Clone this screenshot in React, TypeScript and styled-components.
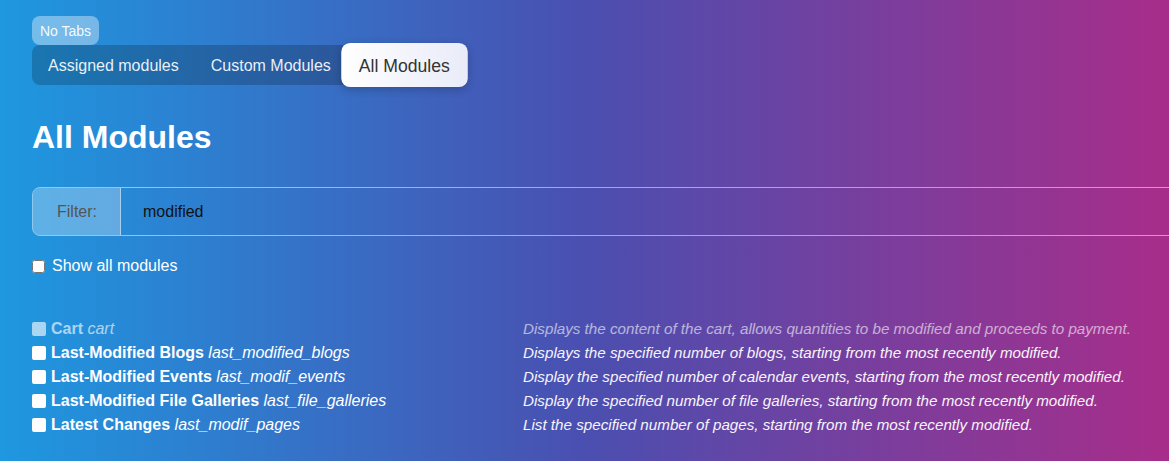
import styled, { createGlobalStyle } from "styled-components";

type Module = {
  name: string;
  code: string;
  description: string;
  disabled?: boolean;
};

const MODULES: Module[] = [
  {
    name: "Cart",
    code: "cart",
    description:
      "Displays the content of the cart, allows quantities to be modified and proceeds to payment.",
    disabled: true,
  },
  {
    name: "Last-Modified Blogs",
    code: "last_modified_blogs",
    description:
      "Displays the specified number of blogs, starting from the most recently modified.",
  },
  {
    name: "Last-Modified Events",
    code: "last_modif_events",
    description:
      "Display the specified number of calendar events, starting from the most recently modified.",
  },
  {
    name: "Last-Modified File Galleries",
    code: "last_file_galleries",
    description:
      "Display the specified number of file galleries, starting from the most recently modified.",
  },
  {
    name: "Latest Changes",
    code: "last_modif_pages",
    description:
      "List the specified number of pages, starting from the most recently modified.",
  },
];

const TABS = ["Assigned modules", "Custom Modules", "All Modules"];

const GlobalStyle = createGlobalStyle`
  html, body {
    margin: 0;
    height: 100%;
  }
  body {
    font-family: "Liberation Sans", Arial, sans-serif;
    background: linear-gradient(to right, #1e98e0 0%, #4a4fb0 50%, #a82d8a 100%);
    color: #fff;
    overflow: hidden;
  }
`;

const Page = styled.div`
  padding: 16px 0 0 32px;
  min-height: 461px;
  box-sizing: border-box;
`;

const Badge = styled.span`
  display: inline-block;
  padding: 6px 8px 5px;
  font-size: 14px;
  line-height: 18px;
  border-radius: 8px;
  background: rgba(255, 255, 255, 0.38);
  color: rgba(255, 255, 255, 0.95);
`;

const TabBar = styled.nav`
  display: flex;
  width: fit-content;
  border-radius: 8px;
  background: rgba(0, 0, 0, 0.2);
`;

const Tab = styled.button<{ $active?: boolean }>`
  border: 0;
  font-family: inherit;
  font-size: 16px;
  line-height: 20px;
  padding: 11px 16px 9px;
  border-radius: 8px;
  cursor: pointer;
  background: ${(p) =>
    p.$active ? "linear-gradient(to right, #ffffff, #e9ebf8)" : "transparent"};
  color: ${(p) => (p.$active ? "#333" : "rgba(255,255,255,0.92)")};
  transform: ${(p) => (p.$active ? "scale(1.1)" : "none")};
  box-shadow: ${(p) => (p.$active ? "0 2px 8px rgba(0,0,0,0.2)" : "none")};
`;

const Title = styled.h1`
  margin: 34px 0 32px;
  font-size: 32px;
  line-height: 36px;
  font-weight: bold;
`;

const FilterGroup = styled.div`
  display: flex;
  height: 49px;
  margin-right: -30px;
  border: 1px solid rgba(255, 255, 255, 0.5);
  border-radius: 8px;
  box-sizing: border-box;
  overflow: hidden;
`;

const FilterLabel = styled.label`
  display: flex;
  align-items: center;
  padding: 0 23px 0 24px;
  font-size: 16px;
  color: #555;
  background: rgba(255, 255, 255, 0.28);
  border-right: 1px solid rgba(255, 255, 255, 0.45);
`;

const FilterInput = styled.input`
  flex: 1;
  border: 0;
  outline: none;
  background: transparent;
  padding: 0 22px;
  font-family: inherit;
  font-size: 16px;
  color: #111;
`;

const ShowAll = styled.label`
  display: flex;
  align-items: center;
  gap: 7px;
  margin-top: 21px;
  font-size: 16px;
  line-height: 18px;
  input {
    margin: 0;
    width: 13px;
    height: 13px;
  }
`;

const ModuleList = styled.ul`
  list-style: none;
  margin: 42px 0 0;
  padding: 0;
`;

const ModuleRow = styled.li<{ $disabled?: boolean }>`
  display: grid;
  grid-template-columns: 491px 1fr;
  align-items: center;
  line-height: 24px;
  opacity: ${(p) => (p.$disabled ? 0.62 : 1)};
`;

const ModuleName = styled.div`
  display: flex;
  align-items: center;
  gap: 5px;
  font-size: 16px;
  white-space: nowrap;
`;

const Check = styled.span`
  width: 14px;
  height: 14px;
  border-radius: 2px;
  background: #fff;
  flex: none;
`;

const Code = styled.i`
  font-weight: normal;
`;

const Description = styled.div`
  font-size: 15.2px;
  font-style: italic;
  white-space: nowrap;
  color: #f7f4fb;
`;

export default function App() {
  return (
    <>
      <GlobalStyle />
      <Page>
        <Badge>No Tabs</Badge>
        <TabBar>
          {TABS.map((t) => (
            <Tab key={t} $active={t === "All Modules"}>
              {t}
            </Tab>
          ))}
        </TabBar>
        <Title>All Modules</Title>
        <FilterGroup>
          <FilterLabel htmlFor="filter">Filter:</FilterLabel>
          <FilterInput id="filter" defaultValue="modified" />
        </FilterGroup>
        <ShowAll>
          <input type="checkbox" />
          Show all modules
        </ShowAll>
        <ModuleList>
          {MODULES.map((m) => (
            <ModuleRow key={m.code} $disabled={m.disabled}>
              <ModuleName>
                <Check />
                <span>
                  <b>{m.name}</b> <Code>{m.code}</Code>
                </span>
              </ModuleName>
              <Description>{m.description}</Description>
            </ModuleRow>
          ))}
        </ModuleList>
      </Page>
    </>
  );
}
